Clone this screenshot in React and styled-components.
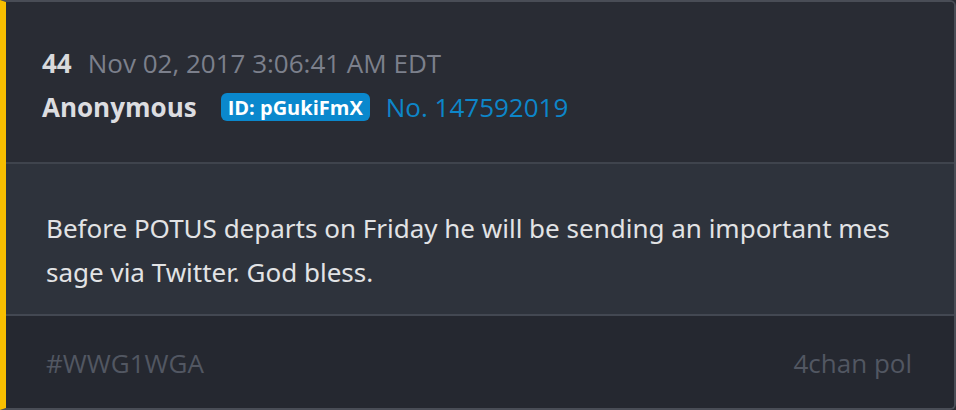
import React from "react";
import styled, { createGlobalStyle } from "styled-components";

const GlobalStyle = createGlobalStyle`
  html, body {
    margin: 0;
    padding: 0;
    background: #2a2d35;
  }
  body {
    font-family: "Open Sans", "Liberation Sans", sans-serif;
  }
`;

const Card = styled.article`
  box-sizing: border-box;
  width: 956px;
  height: 410px;
  display: flex;
  flex-direction: column;
  border: 2px solid #494d56;
  border-left: 6px solid #f7be00;
  border-radius: 0 6px 6px 0;
  overflow: hidden;
  background: #292c34;
`;

const Header = styled.header`
  box-sizing: border-box;
  height: 162px;
  padding: 43px 0 0 36px;
  background: #292c34;
  border-bottom: 2px solid #3f444d;
`;

const Line = styled.div`
  display: flex;
  align-items: center;
  gap: ${(p) => p.gap || 16}px;
  height: 36px;
  margin-top: ${(p) => p.mt || 0}px;
`;

const Count = styled.span`
  font-size: 26px;
  font-weight: 700;
  color: #d8d9dc;
`;

const Stamp = styled.span`
  font-size: 26px;
  color: #7c808c;
`;

const Author = styled.span`
  font-size: 26px;
  font-weight: 700;
  color: #dcdde0;
  margin-right: 8px;
`;

const IdBadge = styled.span`
  display: inline-flex;
  align-items: center;
  height: 28px;
  padding: 0 7px;
  border-radius: 6px;
  background: #0a88cd;
  color: #ffffff;
  font-size: 20px;
  font-weight: 700;
`;

const PostNo = styled.span`
  font-size: 26px;
  color: #0d86c9;
`;

const Body = styled.section`
  box-sizing: border-box;
  height: 152px;
  padding: 42px 60px 0 40px;
  background: #2e333c;
  border-bottom: 2px solid #434852;
`;

const Message = styled.p`
  margin: 0;
  font-family: "Noto Sans", "Open Sans", sans-serif;
  font-size: 26px;
  line-height: 44px;
  color: #e2e3e5;
  word-break: break-all;
`;

const Footer = styled.footer`
  flex: 1;
  display: flex;
  align-items: center;
  justify-content: space-between;
  padding: 2px 42px 0 40px;
  background: #252830;
`;

const Muted = styled.span`
  font-size: 26px;
  color: #525762;
`;

export default function App() {
  return (
    <>
      <GlobalStyle />
      <Card>
        <Header>
          <Line>
            <Count>44</Count>
            <Stamp>Nov 02, 2017 3:06:41 AM EDT</Stamp>
          </Line>
          <Line mt={8}>
            <Author>Anonymous</Author>
            <IdBadge>ID: pGukiFmX</IdBadge>
            <PostNo>No. 147592019</PostNo>
          </Line>
        </Header>
        <Body>
          <Message>
            Before POTUS departs on Friday he will be sending an important message via Twitter. God bless.
          </Message>
        </Body>
        <Footer>
          <Muted>#WWG1WGA</Muted>
          <Muted>4chan pol</Muted>
        </Footer>
      </Card>
    </>
  );
}
